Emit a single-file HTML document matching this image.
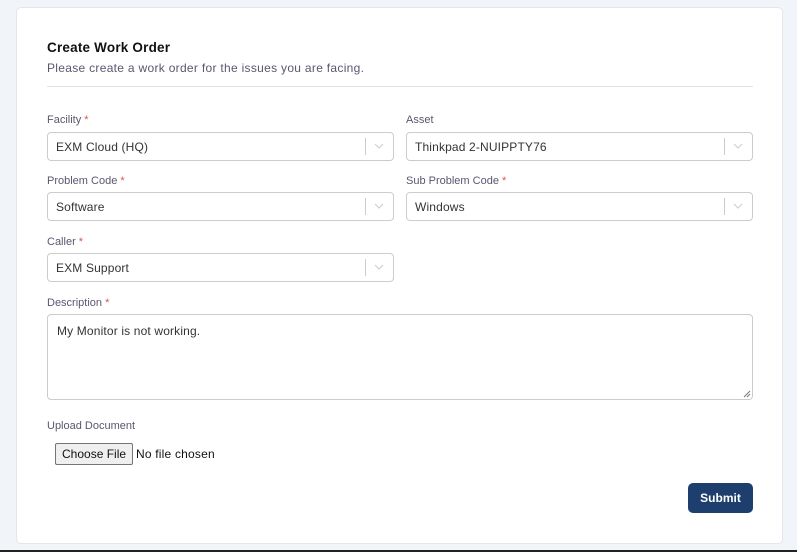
<!DOCTYPE html>
<html><head><style>
*{box-sizing:border-box;margin:0;padding:0}
body{width:797px;height:552px;background:#f1f4f9;font-family:"Liberation Sans",sans-serif;position:relative;overflow:hidden}
.card{position:absolute;left:16px;top:7px;width:767px;height:537px;background:#fff;border:1px solid #e3e6eb;border-radius:5px}
.a{position:absolute}
h1{position:absolute;left:47px;top:40px;font-size:13.5px;font-weight:bold;color:#111;letter-spacing:0.2px}
.sub{left:47px;top:61px;font-size:12px;color:#5b5670;letter-spacing:0.3px}
.hr{left:47px;top:86px;width:706px;height:1px;background:#e3e3e3}
.lbl{font-size:11px;color:#5b5670}
.lbl b{color:#d9534f;font-weight:normal}
.sel{height:29px;border:1px solid #ccc;border-radius:4px;font-size:12px;color:#333;padding:7px 8px;letter-spacing:0.15px}
.sel:after{content:"";position:absolute;right:27px;top:5px;width:1px;height:17px;background:#ccc}
.sel svg{position:absolute;right:9px;top:10px}
.ta{left:47px;top:314px;width:706px;height:86px;border:1px solid #ccc;border-radius:4px;font-size:12px;color:#333;padding:9px 9px;letter-spacing:0.15px}
.bar{left:0;top:550px;width:797px;height:2px;background:#222}
</style></head><body>
<div class="card"></div>
<h1>Create Work Order</h1>
<div class="a sub">Please create a work order for the issues you are facing.</div>
<div class="a hr"></div>

<div class="a lbl" style="left:47px;top:114px">Facility <b>*</b></div>
<div class="a sel" style="left:47px;top:132px;width:347px">EXM Cloud (HQ)<svg width="10" height="7"><path d="M1 1l4 4 4-4" stroke="#ccc" fill="none"/></svg></div>
<div class="a lbl" style="left:406px;top:114px">Asset</div>
<div class="a sel" style="left:406px;top:132px;width:347px">Thinkpad 2-NUIPPTY76<svg width="10" height="7"><path d="M1 1l4 4 4-4" stroke="#ccc" fill="none"/></svg></div>

<div class="a lbl" style="left:47px;top:175px">Problem Code <b>*</b></div>
<div class="a sel" style="left:47px;top:192px;width:347px">Software<svg width="10" height="7"><path d="M1 1l4 4 4-4" stroke="#ccc" fill="none"/></svg></div>
<div class="a lbl" style="left:406px;top:175px">Sub Problem Code <b>*</b></div>
<div class="a sel" style="left:406px;top:192px;width:347px">Windows<svg width="10" height="7"><path d="M1 1l4 4 4-4" stroke="#ccc" fill="none"/></svg></div>

<div class="a lbl" style="left:47px;top:236px">Caller <b>*</b></div>
<div class="a sel" style="left:47px;top:253px;width:347px">EXM Support<svg width="10" height="7"><path d="M1 1l4 4 4-4" stroke="#ccc" fill="none"/></svg></div>

<div class="a lbl" style="left:47px;top:297px">Description <b>*</b></div>
<div class="a ta">My Monitor is not working.<svg class="a" style="right:1px;bottom:1px" width="8" height="8"><path d="M7 1L1 7M7 4L4 7" stroke="#777"/></svg></div>

<div class="a lbl" style="left:47px;top:420px">Upload Document</div>
<div class="a" style="left:55px;top:443px;width:78px;height:22px;background:#efefef;border:1px solid #767676;border-radius:2px;font-size:12px;color:#111;padding:3px 0 0 6px">Choose File</div>
<div class="a" style="left:136px;top:447px;font-size:12px;color:#111;letter-spacing:0.2px">No file chosen</div>

<div class="a" style="left:688px;top:483px;width:65px;height:30px;background:#1e3f6e;border-radius:5px;color:#fff;font-size:12px;font-weight:bold;text-align:center;line-height:30px">Submit</div>
<div class="a bar"></div>
</body></html>
